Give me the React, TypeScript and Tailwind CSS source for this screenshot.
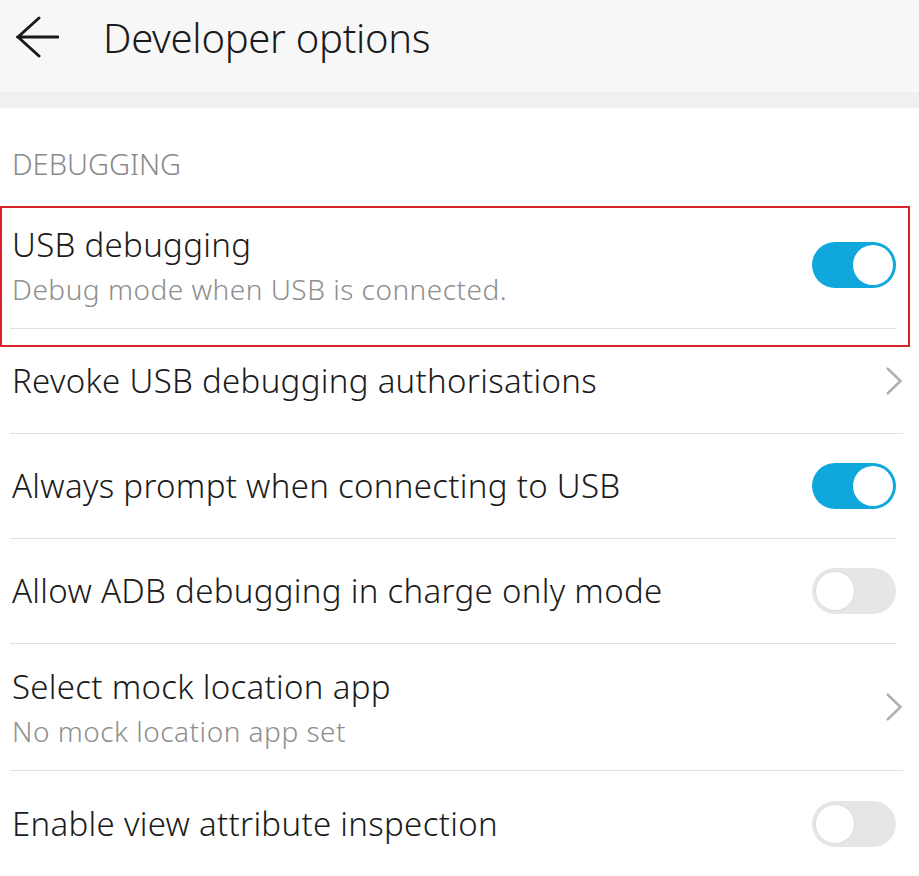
import React from "react";

const font = { fontFamily: "'Noto Sans', Roboto, sans-serif" };

function Toggle({ on }: { on: boolean }) {
  return on ? (
    <div className="w-[84px] h-[46px] rounded-full bg-[#10a8dc] flex items-center justify-end pr-[3px]">
      <div className="w-[40px] h-[40px] rounded-full bg-white" />
    </div>
  ) : (
    <div className="w-[84px] h-[46px] rounded-full bg-[#e6e6e6] flex items-center pl-[3px]">
      <div className="w-[40px] h-[40px] rounded-full bg-white border border-[#dcdcdc]" />
    </div>
  );
}

function Chevron() {
  return (
    <svg width="18" height="30" viewBox="0 0 18 30" className="block">
      <path d="M2 2 L15.5 15 L2 28" fill="none" stroke="#b0b0b0" strokeWidth="2.6" />
    </svg>
  );
}

function Row({
  title,
  sub,
  control,
  last,
}: {
  title: string;
  sub?: string;
  control: React.ReactNode;
  last?: boolean;
}) {
  return (
    <div
      className={
        "flex items-center justify-between pl-[2px] " +
        (sub ? "h-[127px] " : "h-[105px] ") +
        (last ? "" : "border-b-[1.5px] border-[#e2e2e2]")
      }
    >
      {sub ? (
        <div className="flex flex-col mt-[4px]">
          <div className="text-[33px] leading-[44px] tracking-[0.3px] font-light text-[#1b1b1b]">{title}</div>
          <div className="text-[28px] leading-[44px] tracking-[0.5px] font-light text-[#8e8e8e]">{sub}</div>
        </div>
      ) : (
        <div className="text-[33px] leading-[44px] tracking-[0.3px] font-light text-[#1b1b1b]">{title}</div>
      )}
      {control}
    </div>
  );
}

export default function App() {
  return (
    <div className="relative w-[919px] h-[876px] overflow-hidden bg-white" style={font}>
      <div className="h-[92px] bg-[#f7f7f7] flex items-start">
        <svg width="44" height="44" viewBox="0 0 44 44" className="ml-[15px] mt-[15px] block">
          <path d="M2.5 22 H43 M24 3 L3 22 L24 41" fill="none" stroke="#1a1a1a" strokeWidth="3" strokeLinecap="round" strokeLinejoin="round" />
        </svg>
        <div className="ml-[44px] mt-[18px] text-[40px] tracking-[-0.3px] font-light text-[#1b1b1b] leading-none">
          Developer options
        </div>
      </div>
      <div className="h-[16px] bg-[#f0f0f0]" />
      <div className="h-[94px] pl-[12px] pt-[38px]">
        <div className="text-[29px] leading-[36px] font-light text-[#8a8a8a]">DEBUGGING</div>
      </div>
      <div className="ml-[10px] mr-[9px]">
        <div className="pr-[14px]">
          <Row title="USB debugging" sub="Debug mode when USB is connected." control={<Toggle on />} />
        </div>
        <div className="pr-[7px]">
          <Row title="Revoke USB debugging authorisations" control={<Chevron />} />
        </div>
        <div className="pr-[14px]">
          <Row title="Always prompt when connecting to USB" control={<Toggle on />} />
        </div>
        <div className="pr-[14px]">
          <Row title="Allow ADB debugging in charge only mode" control={<Toggle on={false} />} />
        </div>
        <div className="pr-[7px]">
          <Row title="Select mock location app" sub="No mock location app set" control={<Chevron />} />
        </div>
        <div className="pr-[14px]">
          <Row title="Enable view attribute inspection" control={<Toggle on={false} />} last />
        </div>
      </div>
      <div className="absolute left-0 top-[206px] w-[910px] h-[141px] border-[2.5px] border-[#d8232a] pointer-events-none" />
    </div>
  );
}
